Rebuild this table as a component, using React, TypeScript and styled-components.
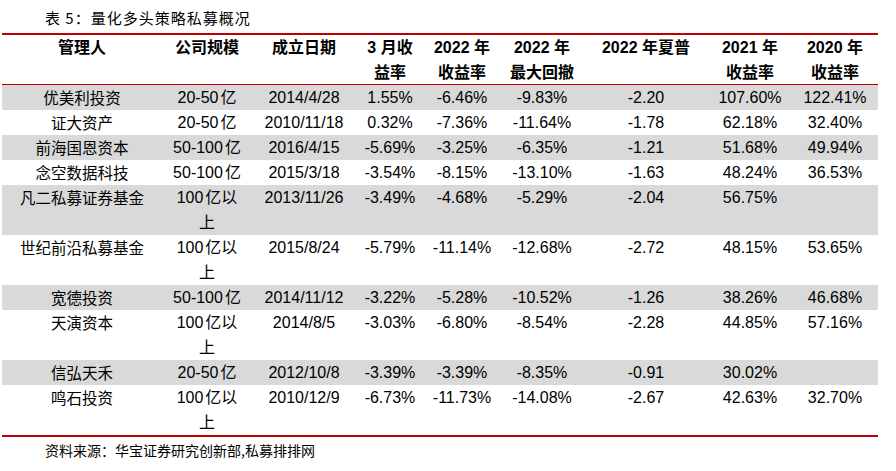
import React from "react";
import styled, { createGlobalStyle } from "styled-components";

const GlobalStyle = createGlobalStyle`
  body {
    margin: 0;
    background: #ffffff;
    font-family: "Liberation Sans", Arial, "Noto Sans CJK SC", sans-serif;
    color: #000000;
  }
`;

const COLS = "160px 90px 104px 68px 76px 84px 124px 84px 86px";
const NUM_FONT = `"Liberation Sans", Arial, "Noto Sans CJK SC", sans-serif`;
const CJK_FONT = `"Noto Sans CJK SC", "Liberation Sans", sans-serif`;

type Row = {
  name: string;
  amount: string;
  unit: string;
  date: string;
  cells: string[];
};

const rows: Row[] = [
  { name: "优美利投资", amount: "20-50", unit: "亿", date: "2014/4/28", cells: ["1.55%", "-6.46%", "-9.83%", "-2.20", "107.60%", "122.41%"] },
  { name: "证大资产", amount: "20-50", unit: "亿", date: "2010/11/18", cells: ["0.32%", "-7.36%", "-11.64%", "-1.78", "62.18%", "32.40%"] },
  { name: "前海国恩资本", amount: "50-100", unit: "亿", date: "2016/4/15", cells: ["-5.69%", "-3.25%", "-6.35%", "-1.21", "51.68%", "49.94%"] },
  { name: "念空数据科技", amount: "50-100", unit: "亿", date: "2015/3/18", cells: ["-3.54%", "-8.15%", "-13.10%", "-1.63", "48.24%", "36.53%"] },
  { name: "凡二私募证券基金", amount: "100", unit: "亿以\n上", date: "2013/11/26", cells: ["-3.49%", "-4.68%", "-5.29%", "-2.04", "56.75%", ""] },
  { name: "世纪前沿私募基金", amount: "100", unit: "亿以\n上", date: "2015/8/24", cells: ["-5.79%", "-11.14%", "-12.68%", "-2.72", "48.15%", "53.65%"] },
  { name: "宽德投资", amount: "50-100", unit: "亿", date: "2014/11/12", cells: ["-3.22%", "-5.28%", "-10.52%", "-1.26", "38.26%", "46.68%"] },
  { name: "天演资本", amount: "100", unit: "亿以\n上", date: "2014/8/5", cells: ["-3.03%", "-6.80%", "-8.54%", "-2.28", "44.85%", "57.16%"] },
  { name: "信弘天禾", amount: "20-50", unit: "亿", date: "2012/10/8", cells: ["-3.39%", "-3.39%", "-8.35%", "-0.91", "30.02%", ""] },
  { name: "鸣石投资", amount: "100", unit: "亿以\n上", date: "2010/12/9", cells: ["-6.73%", "-11.73%", "-14.08%", "-2.67", "42.63%", "32.70%"] },
];

const headers = [
  "管理人",
  "公司规模",
  "成立日期",
  "3 月收\n益率",
  "2022 年\n收益率",
  "2022 年\n最大回撤",
  "2022 年夏普",
  "2021 年\n收益率",
  "2020 年\n收益率",
];

export default function App() {
  return (
    <Page>
      <GlobalStyle />
      <Title>表 5：量化多头策略私募概况</Title>
      <Table>
        <HeaderRow>
          {headers.map((h) => (
            <HeadCell key={h}>{h}</HeadCell>
          ))}
        </HeaderRow>
        {rows.map((r, i) => (
          <DataRow key={r.name} $shaded={i % 2 === 0}>
            <NameCell>{r.name}</NameCell>
            <Cell>
              {r.amount}
              <Unit>{r.unit}</Unit>
            </Cell>
            <Cell>{r.date}</Cell>
            {r.cells.map((c, j) => (
              <Cell key={j}>{c}</Cell>
            ))}
          </DataRow>
        ))}
      </Table>
      <Source>资料来源：华宝证券研究创新部,私募排排网</Source>
    </Page>
  );
}

const Page = styled.div`
  width: 896px;
  height: 471px;
  padding-top: 8px;
  box-sizing: border-box;
  font-family: ${NUM_FONT};
`;

const Title = styled.div`
  padding-left: 45px;
  height: 25px;
  line-height: 20px;
  font-size: 15px;
  letter-spacing: 1px;
  font-family: ${CJK_FONT};
`;

const Table = styled.div`
  margin-left: 2px;
  width: 876px;
  border-top: 2px solid #c00000;
  border-bottom: 2px solid #c00000;
`;

const HeaderRow = styled.div`
  display: grid;
  grid-template-columns: ${COLS};
  height: 49px;
  border-bottom: 1px solid #c00000;
`;

const HeadCell = styled.div`
  text-align: center;
  white-space: pre-line;
  font-family: ${NUM_FONT};
  font-size: 16px;
  font-weight: 700;
  line-height: 25px;
`;

const DataRow = styled.div<{ $shaded: boolean }>`
  display: grid;
  grid-template-columns: ${COLS};
  background: ${(p) => (p.$shaded ? "#d9d9d9" : "transparent")};
`;

const Cell = styled.div`
  text-align: center;
  white-space: pre-line;
  font-family: ${NUM_FONT};
  font-size: 16px;
  line-height: 25px;
`;

const Unit = styled.span`
  margin-left: 2px;
`;

const NameCell = styled(Cell)`
  font-family: ${CJK_FONT};
  font-size: 15.5px;
`;

const Source = styled.div`
  padding-left: 45px;
  margin-top: 3px;
  font-size: 14px;
  line-height: 20px;
  font-family: ${CJK_FONT};
`;
